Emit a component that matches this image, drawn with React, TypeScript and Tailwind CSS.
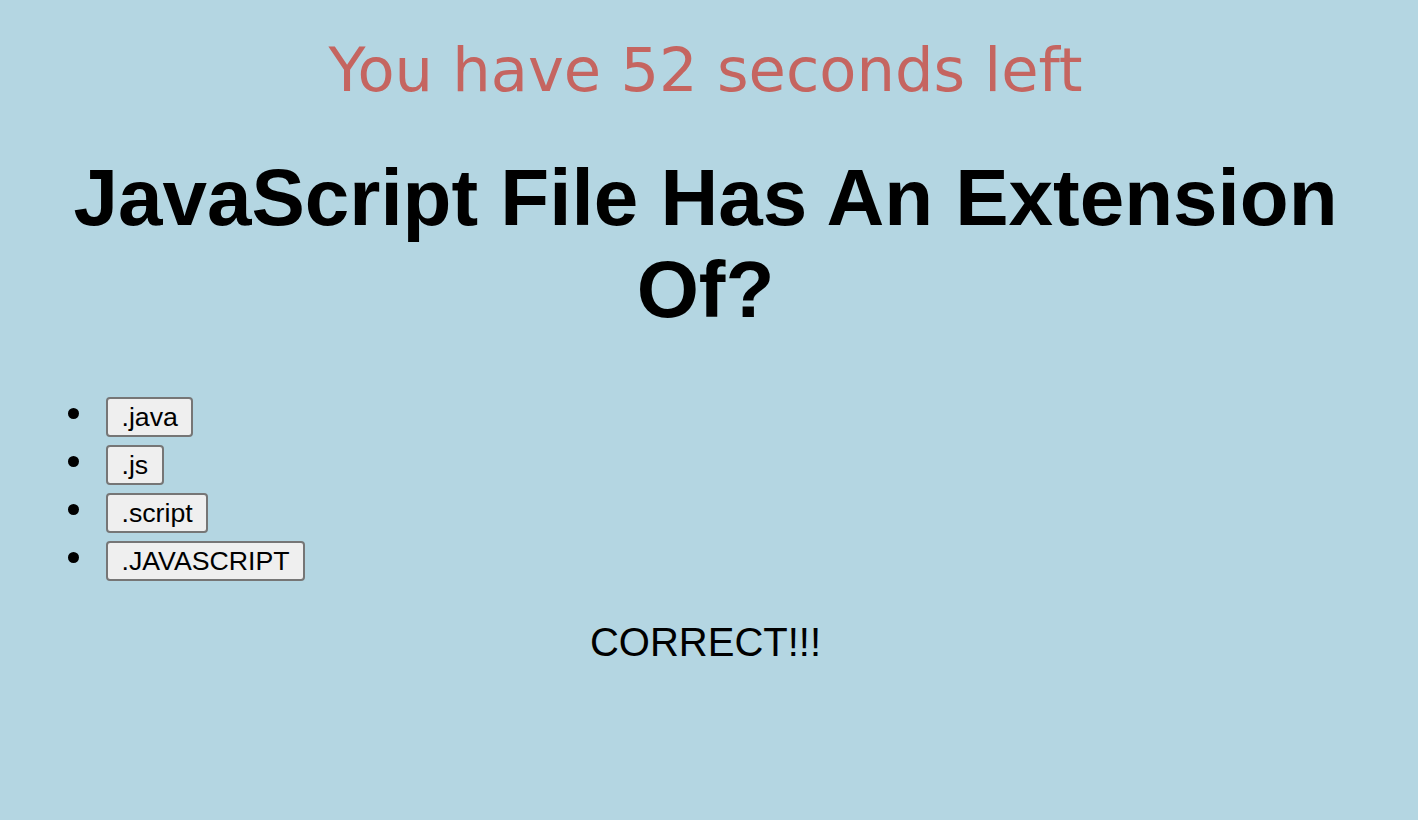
import { useState } from 'react';

const options = ['.java', '.js', '.script', '.JAVASCRIPT'];

function App() {
  const [picked, setPicked] = useState<string | null>('.js');

  return (
    <div className="min-h-screen pr-[7px] bg-[#b4d6e2] text-black font-['Liberation_Sans',Arial,sans-serif]">
      {/* Timer */}
      <div className="pt-[35px] text-center">
        <p className="text-[60.7px] leading-[70px] text-[#c56560] font-['DejaVu_Sans',Verdana,sans-serif]">
          You have 52 seconds left
        </p>
      </div>

      {/* Question */}
      <h1 className="mt-[47px] px-8 text-center text-[80px] leading-[92px] font-bold">
        JavaScript File Has An Extension Of?
      </h1>

      {/* Answers */}
      <ul className="mt-[61px] pl-[68px] flex flex-col gap-2">
        {options.map((opt) => (
          <li key={opt} className="flex items-center h-[40px]">
            <span className="w-[11px] h-[11px] mb-[8px] rounded-full bg-black" />
            <button
              onClick={() => setPicked(opt)}
              className="ml-[27px] h-[40px] px-[13.5px] text-[26.7px] leading-none bg-[#efefef] border-2 border-[#767676] rounded-[4px] hover:bg-[#e5e5e5]"
            >
              {opt}
            </button>
          </li>
        ))}
      </ul>

      {/* Result */}
      {picked && (
        <p className="mt-[38px] text-center text-[40px] leading-[46px]">
          {picked === '.js' ? 'CORRECT!!!' : 'WRONG!!!'}
        </p>
      )}
    </div>
  );
}

export default App;
